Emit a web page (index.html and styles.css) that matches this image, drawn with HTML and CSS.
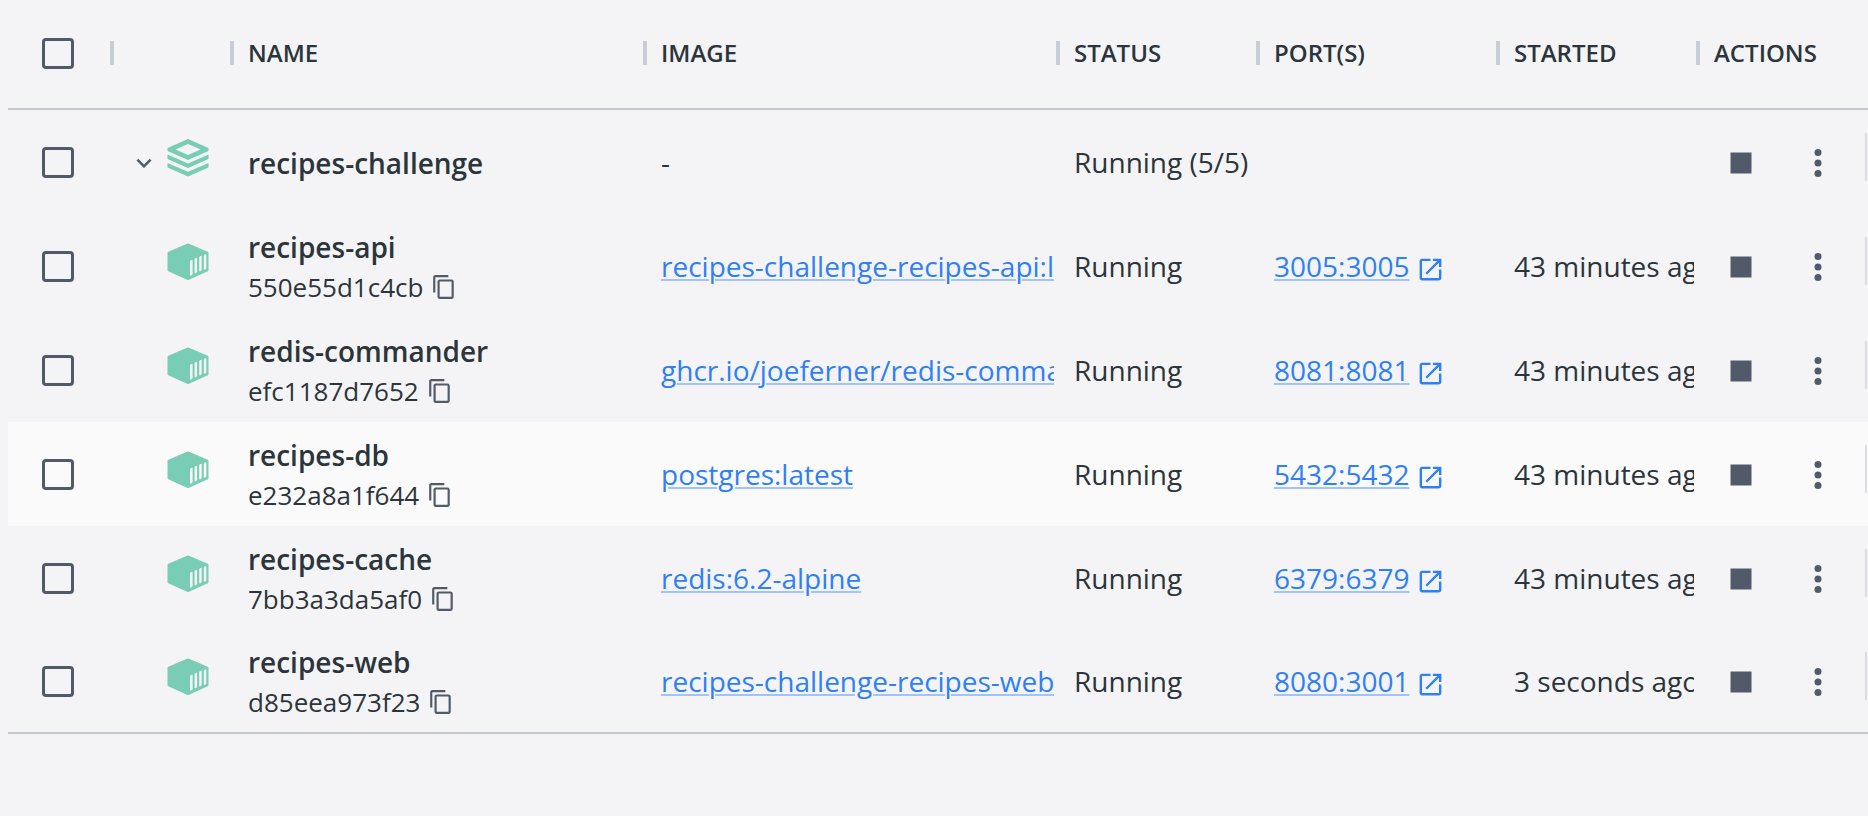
FILE: index.html
```html
<!DOCTYPE html>
<html lang="en">
<head>
<meta charset="utf-8">
<title>Containers</title>
<link rel="stylesheet" href="styles.css">
</head>
<body>
<svg class="sprite" aria-hidden="true">
  <symbol id="stack" viewBox="0 0 42 38">
    <path fill-rule="evenodd" d="M21 0 41.500 9v3L21 21 .5 12V9zM21 5 8.500 10.500 21 16l12.500-5.500z"/>
    <path d="M.5 15.500 21 24.500l20.500-9v4.500L21 29 .5 20zM.5 24 21 32.800 41.500 24v4.500L21 37.500.5 28.500z"/>
  </symbol>
  <symbol id="container" viewBox="0 0 42 38">
    <path fill-rule="evenodd" d="M20 .7q1-.5 2 0L40.700 8.800q.8.400.8 1.200V27q0 .9-.8 1.300L22 36.700q-1 .5-2 0L1.300 28.300Q.5 27.900.5 27V10q0-.8.8-1.200zM23 18.200V32q0 .8.800.5l1.200-.5q.6-.3.600-1V17.200q0-.7-.6-.5l-1.300.6q-.7.300-.7.900zM27.600 16.200v13.600q0 .8.700.5l1.200-.5q.6-.3.600-1V15.200q0-.7-.6-.5l-1.200.6q-.7.300-.7.900zM32.200 14.200v13.600q0 .8.700.5l1.200-.5q.6-.3.600-1V13.200q0-.7-.6-.5l-1.200.6q-.7.300-.7.900zM36.800 12.700v13.600q0 .8.700.5l1.200-.5q.6-.3.600-1V11.700q0-.7-.6-.5l-1.200.6q-.7.300-.7.900z"/>
  </symbol>
  <symbol id="chevron" viewBox="0 0 24 24"><path d="M16.590 8.590 12 13.170 7.410 8.590 6 10l6 6 6-6z"/></symbol>
  <symbol id="copy" viewBox="0 0 24 24"><path d="M16 1H4c-1.100 0-2 .9-2 2v14h2V3h12V1zm3 4H8c-1.100 0-2 .9-2 2v14c0 1.100.9 2 2 2h11c1.100 0 2-.9 2-2V7c0-1.100-.9-2-2-2zm0 16H8V7h11v14z"/></symbol>
  <symbol id="open" viewBox="0 0 24 24"><path d="M19 19H5V5h7V3H5c-1.110 0-2 .9-2 2v14c0 1.100.89 2 2 2h14c1.100 0 2-.9 2-2v-7h-2v7zM14 3v2h3.590l-9.830 9.830 1.410 1.410L19 6.410V10h2V3h-7z"/></symbol>
  <symbol id="stop" viewBox="0 0 24 24"><path d="M6 6h12v12H6z"/></symbol>
  <symbol id="more" viewBox="0 0 24 24"><circle cx="12" cy="6" r="2"/><circle cx="12" cy="12" r="2"/><circle cx="12" cy="18" r="2"/></symbol>
</svg>
<main class="page">
<table class="grid">
  <colgroup>
    <col class="col-check"><col class="col-icon"><col><col>
    <col class="col-status"><col class="col-ports"><col class="col-started"><col class="col-actions">
  </colgroup>
  <thead>
    <tr>
      <th class="check"><input type="checkbox" class="box" aria-label="Select all containers"></th>
      <th><div class="head"></div></th>
      <th><div class="head">NAME</div></th>
      <th><div class="head">IMAGE</div></th>
      <th><div class="head">STATUS</div></th>
      <th><div class="head">PORT(S)</div></th>
      <th><div class="head">STARTED</div></th>
      <th><div class="head">ACTIONS</div></th>
    </tr>
  </thead>
  <tbody>
    <tr>
      <td class="check"><input type="checkbox" class="box" aria-label="Select recipes-challenge"></td>
      <td class="kind"><div class="kind-row"><button class="plain" aria-label="Collapse"><svg class="i-chevron"><use href="#chevron"/></svg></button><svg class="i-kind"><use href="#stack"/></svg></div></td>
      <td class="text title"><div class="name">recipes-challenge</div></td>
      <td class="text">-</td>
      <td class="text">Running (5/5)</td>
      <td class="text"></td>
      <td class="text"></td>
      <td><div class="actions"><button class="plain" aria-label="Stop"><svg class="i-action"><use href="#stop"/></svg></button><button class="plain" aria-label="More"><svg class="i-action"><use href="#more"/></svg></button><span class="rule"></span></div></td>
    </tr>
    <tr>
      <td class="check"><input type="checkbox" class="box" aria-label="Select recipes-api"></td>
      <td class="kind"><div class="kind-row"><svg class="i-kind"><use href="#container"/></svg></div></td>
      <td class="text title"><div class="name">recipes-api</div><div class="id">550e55d1c4cb<button class="plain" aria-label="Copy ID"><svg class="i-copy"><use href="#copy"/></svg></button></div></td>
      <td class="text"><a class="link" href="#">recipes-challenge-recipes-api:latest</a></td>
      <td class="text">Running</td>
      <td class="text"><div class="port"><a class="link" href="#">3005:3005</a><svg class="i-open"><use href="#open"/></svg></div></td>
      <td class="text">43 minutes ago</td>
      <td><div class="actions"><button class="plain" aria-label="Stop"><svg class="i-action"><use href="#stop"/></svg></button><button class="plain" aria-label="More"><svg class="i-action"><use href="#more"/></svg></button><span class="rule"></span></div></td>
    </tr>
    <tr>
      <td class="check"><input type="checkbox" class="box" aria-label="Select redis-commander"></td>
      <td class="kind"><div class="kind-row"><svg class="i-kind"><use href="#container"/></svg></div></td>
      <td class="text title"><div class="name">redis-commander</div><div class="id">efc1187d7652<button class="plain" aria-label="Copy ID"><svg class="i-copy"><use href="#copy"/></svg></button></div></td>
      <td class="text"><a class="link" href="#">ghcr.io/joeferner/redis-commander</a></td>
      <td class="text">Running</td>
      <td class="text"><div class="port"><a class="link" href="#">8081:8081</a><svg class="i-open"><use href="#open"/></svg></div></td>
      <td class="text">43 minutes ago</td>
      <td><div class="actions"><button class="plain" aria-label="Stop"><svg class="i-action"><use href="#stop"/></svg></button><button class="plain" aria-label="More"><svg class="i-action"><use href="#more"/></svg></button><span class="rule"></span></div></td>
    </tr>
    <tr class="active">
      <td class="check"><input type="checkbox" class="box" aria-label="Select recipes-db"></td>
      <td class="kind"><div class="kind-row"><svg class="i-kind"><use href="#container"/></svg></div></td>
      <td class="text title"><div class="name">recipes-db</div><div class="id">e232a8a1f644<button class="plain" aria-label="Copy ID"><svg class="i-copy"><use href="#copy"/></svg></button></div></td>
      <td class="text"><a class="link" href="#">postgres:latest</a></td>
      <td class="text">Running</td>
      <td class="text"><div class="port"><a class="link" href="#">5432:5432</a><svg class="i-open"><use href="#open"/></svg></div></td>
      <td class="text">43 minutes ago</td>
      <td><div class="actions"><button class="plain" aria-label="Stop"><svg class="i-action"><use href="#stop"/></svg></button><button class="plain" aria-label="More"><svg class="i-action"><use href="#more"/></svg></button><span class="rule"></span></div></td>
    </tr>
    <tr>
      <td class="check"><input type="checkbox" class="box" aria-label="Select recipes-cache"></td>
      <td class="kind"><div class="kind-row"><svg class="i-kind"><use href="#container"/></svg></div></td>
      <td class="text title"><div class="name">recipes-cache</div><div class="id">7bb3a3da5af0<button class="plain" aria-label="Copy ID"><svg class="i-copy"><use href="#copy"/></svg></button></div></td>
      <td class="text"><a class="link" href="#">redis:6.2-alpine</a></td>
      <td class="text">Running</td>
      <td class="text"><div class="port"><a class="link" href="#">6379:6379</a><svg class="i-open"><use href="#open"/></svg></div></td>
      <td class="text">43 minutes ago</td>
      <td><div class="actions"><button class="plain" aria-label="Stop"><svg class="i-action"><use href="#stop"/></svg></button><button class="plain" aria-label="More"><svg class="i-action"><use href="#more"/></svg></button><span class="rule"></span></div></td>
    </tr>
    <tr class="last">
      <td class="check"><input type="checkbox" class="box" aria-label="Select recipes-web"></td>
      <td class="kind"><div class="kind-row"><svg class="i-kind"><use href="#container"/></svg></div></td>
      <td class="text title"><div class="name">recipes-web</div><div class="id">d85eea973f23<button class="plain" aria-label="Copy ID"><svg class="i-copy"><use href="#copy"/></svg></button></div></td>
      <td class="text"><a class="link" href="#">recipes-challenge-recipes-web:latest</a></td>
      <td class="text">Running</td>
      <td class="text"><div class="port"><a class="link" href="#">8080:3001</a><svg class="i-open"><use href="#open"/></svg></div></td>
      <td class="text">3 seconds ago</td>
      <td><div class="actions"><button class="plain" aria-label="Stop"><svg class="i-action"><use href="#stop"/></svg></button><button class="plain" aria-label="More"><svg class="i-action"><use href="#more"/></svg></button><span class="rule"></span></div></td>
    </tr>
  </tbody>
</table>
</main>
</body>
</html>
```

FILE: styles.css
```css
* { box-sizing: border-box; }

body {
  margin: 0;
  background: #f4f4f6;
  color: #2b353b;
  font: 28px/40px "Open Sans", "Noto Sans", sans-serif;
}

.sprite { display: none; }
.page { padding-left: 8px; }

.grid {
  width: 100%;
  table-layout: fixed;
  border-collapse: separate;
  border-spacing: 0;
}
.col-check { width: 100px; }
.col-icon { width: 120px; }
.col-status { width: 200px; }
.col-ports { width: 240px; }
.col-started { width: 200px; }
.col-actions { width: 174px; }

th, td {
  height: 104px;
  padding: 0;
  text-align: left;
  vertical-align: middle;
  white-space: nowrap;
}
th {
  height: 110px;
  padding-bottom: 2px;
  border-bottom: 2px solid #c4c8d1;
  font-size: 24px;
  font-weight: 600;
}
.last td { border-bottom: 2px solid #c4c8d1; }
.active td { background: #fafafb; }

.head {
  display: flex;
  align-items: center;
  gap: 14px;
  padding-left: 2px;
}
.head::before {
  content: "";
  width: 4px;
  height: 24px;
  background: #c8ccd5;
}

.check { line-height: 0; }
td.check { padding-top: 1px; }
.box {
  appearance: none;
  width: 32px;
  height: 31px;
  margin: 0 0 0 34px;
  border: 3px solid #525a69;
  border-radius: 4px;
}

.kind { padding-bottom: 8px; }
.kind-row {
  display: flex;
  align-items: center;
  justify-content: flex-end;
  padding-right: 19px;
}
.kind-row .plain { margin: 10px 8px 0 0; }

.text {
  padding-left: 20px;
  overflow: hidden;
}
.title { padding-top: 2px; }
.name { font-weight: 600; }
.id {
  display: flex;
  align-items: center;
  gap: 8px;
  font-size: 26px;
}

.link {
  color: #2f80f6;
  text-decoration: underline 2px #a1c3f8;
  text-underline-offset: 2px;
}
.port {
  display: flex;
  align-items: center;
  gap: 7px;
}

.plain {
  display: flex;
  padding: 0;
  border: 0;
  background: none;
  color: #525a69;
}

svg { fill: currentColor; flex: none; }
.i-chevron { width: 30px; height: 30px; }
.i-kind { width: 42px; height: 38px; color: #78cdb4; }
.i-copy { width: 26px; height: 26px; }
.i-open { width: 29px; height: 29px; margin-top: 6px; color: #2f80f6; }
.i-action { width: 42px; height: 42px; }

.actions {
  display: flex;
  align-items: center;
  padding: 1px 1px 0 26px;
}
.actions .plain + .plain { margin-left: 35px; }
.rule {
  width: 2px;
  height: 48px;
  margin: 0 0 12px auto;
  background: #dcdde0;
}
```
